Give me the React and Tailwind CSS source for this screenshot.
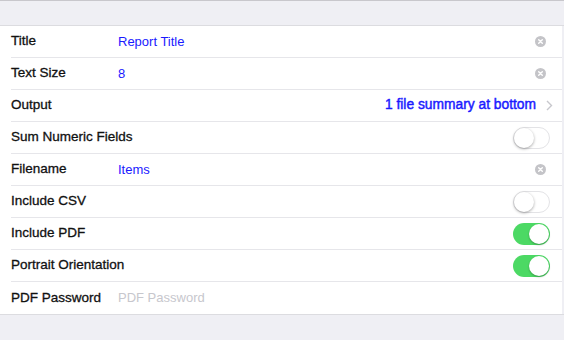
const rows = [
  { label: "Title", kind: "text", value: "Report Title" },
  { label: "Text Size", kind: "text", value: "8" },
  { label: "Output", kind: "link", value: "1 file summary at bottom" },
  { label: "Sum Numeric Fields", kind: "toggle", on: false },
  { label: "Filename", kind: "text", value: "Items" },
  { label: "Include CSV", kind: "toggle", on: false },
  { label: "Include PDF", kind: "toggle", on: true },
  { label: "Portrait Orientation", kind: "toggle", on: true },
  { label: "PDF Password", kind: "placeholder", value: "PDF Password" },
];

const ClearIcon = () => (
  <svg width="11" height="11" viewBox="0 0 11 11">
    <circle cx="5.5" cy="5.5" r="5.5" fill="#c4c4c8" />
    <path d="M3.7 3.7 L7.3 7.3 M7.3 3.7 L3.7 7.3" stroke="#fff" strokeWidth="1.4" strokeLinecap="round" />
  </svg>
);

const Chevron = () => (
  <svg width="7" height="11" viewBox="0 0 7 11">
    <path d="M1 1 L5.5 5.5 L1 10" fill="none" stroke="#c7c7cc" strokeWidth="1.4" />
  </svg>
);

const Toggle = ({ on }) =>
  on ? (
    <div className="flex h-[22px] w-[37px] items-center justify-end rounded-full bg-[#4cd964] pr-[1px]">
      <div className="h-[20px] w-[20px] rounded-full bg-white shadow-[0_1px_2px_rgba(0,0,0,0.3)]" />
    </div>
  ) : (
    <div className="flex h-[22px] w-[37px] items-center rounded-full border border-[#e3e3e6] bg-white">
      <div className="h-[20px] w-[20px] rounded-full bg-white shadow-[0_1px_3px_rgba(0,0,0,0.35)]" />
    </div>
  );

export default function App() {
  return (
    <div
      className="flex h-[340px] w-[564px] flex-col overflow-hidden bg-[#efeff4]"
      style={{ fontFamily: '"Liberation Sans", Arial, sans-serif' }}
    >
      <div className="h-[26px] shrink-0 border-t border-b border-t-[#c8c7cc] border-b-[#dcdce0]" />
      <div className="border-r-2 border-r-[#efeff4] bg-white">
        {rows.map((row, i) => (
          <div key={row.label} className="pl-[11px]">
            <div
              className={`flex h-[32px] items-center pr-[15px] ${
                i < rows.length - 1 ? "border-b border-[#e6e6ea]" : ""
              }`}
            >
              <span className="w-[107px] shrink-0 whitespace-nowrap text-[13.5px] text-[#111] [-webkit-text-stroke:0.3px_#111]">
                {row.label}
              </span>
              {row.kind === "text" && (
                <>
                  <span className="flex-1 text-[13px] text-[#1a1aff]">{row.value}</span>
                  <span className="mr-[1px] flex items-center">
                    <ClearIcon />
                  </span>
                </>
              )}
              {row.kind === "link" && (
                <div className="flex flex-1 items-center justify-end gap-[10px]">
                  <span className="text-[13.8px] text-[#1a1aff] [-webkit-text-stroke:0.45px_#1a1aff]">
                    {row.value}
                  </span>
                  <span className="mr-[-6px] flex items-center">
                    <Chevron />
                  </span>
                </div>
              )}
              {row.kind === "toggle" && (
                <div className="flex flex-1 justify-end">
                  <span className="mr-[-3px]">
                    <Toggle on={row.on} />
                  </span>
                </div>
              )}
              {row.kind === "placeholder" && (
                <span className="flex-1 text-[13px] text-[#c7c7cd]">{row.value}</span>
              )}
            </div>
          </div>
        ))}
      </div>
      <div className="flex-1 border-t border-[#dcdce0]" />
    </div>
  );
}
